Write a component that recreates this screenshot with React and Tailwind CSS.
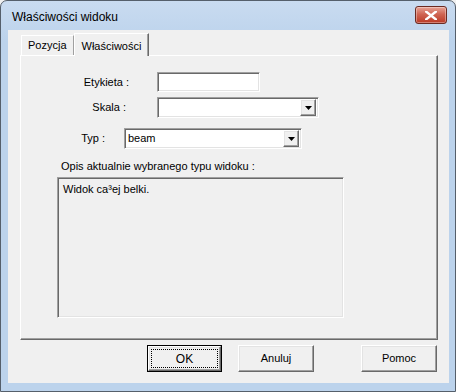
const sunken =
  'border border-t-[#a0a0a0] border-l-[#a0a0a0] border-b-white border-r-white shadow-[inset_1px_1px_0_#696969,inset_-1px_-1px_0_#e3e3e3]';
const raised =
  'border border-t-white border-l-white border-b-[#696969] border-r-[#696969] shadow-[inset_-1px_-1px_0_#a0a0a0,inset_1px_1px_0_#e3e3e3]';

function DropArrow() {
  return (
    <div className={`w-[16px] h-[17px] bg-[#f0f0f0] flex items-center justify-center ${raised}`}>
      <svg width="7" height="4" viewBox="0 0 7 4">
        <path d="M0 0h7L3.5 4z" fill="#000" />
      </svg>
    </div>
  );
}

function Combo({ width, value }) {
  return (
    <div className={`h-[21px] bg-white flex items-center pl-[2px] pr-[2px] ${sunken}`} style={{ width }}>
      <span className="flex-1 text-[11px] text-black leading-none pl-[1px]">{value}</span>
      <DropArrow />
    </div>
  );
}

function Button({ children, isDefault }) {
  if (isDefault) {
    return (
      <div className="w-[75px] h-[27px] border border-black">
        <div className={`w-full h-full bg-[#f0f0f0] p-[2px] ${raised}`}>
          <div className="w-full h-full border border-dotted border-black flex items-center justify-center text-[12px] text-black">
            {children}
          </div>
        </div>
      </div>
    );
  }
  return (
    <div className={`w-[76px] h-[27px] bg-[#f0f0f0] flex items-center justify-center text-[11px] text-black ${raised}`}>
      {children}
    </div>
  );
}

export default function App() {
  return (
    <div className="w-[456px] h-[392px] bg-[#f0f0f0] font-['Liberation_Sans',Arial,sans-serif]">
      <div className="w-[456px] h-[392px] flex flex-col rounded-t-[7px] border border-[#555f6b] bg-[linear-gradient(to_bottom,#c9dbf0,#bcd3ec_40px,#bcd3ec)] overflow-hidden">
        <div className="h-[29px] flex items-center pl-[11px] pr-[8px] shrink-0">
          <span className="flex-1 text-[12px] text-black mt-[2px]">Właściwości widoku</span>
          <div className="w-[32px] h-[18px] rounded-[3px] border border-[#6b2a22] bg-[linear-gradient(to_bottom,#e8a497,#cf6553_45%,#bb3a26)] flex items-center justify-center -mt-[1px] shadow-[inset_0_0_0_1px_rgba(255,255,255,0.35)]">
            <svg width="12" height="9" viewBox="0 0 12 9">
              <path d="M1 0.5 L11 8.5 M11 0.5 L1 8.5" stroke="#fff" strokeWidth="2.4" strokeLinecap="square" />
            </svg>
          </div>
        </div>

        <div className="ml-[7px] w-[441px] h-[353px] bg-[#f0f0f0] flex flex-col shrink-0">
          <div className="flex items-end h-[25px] pl-[13px]">
            <div className="h-[20px] px-[6px] flex items-center border-l border-t border-white border-r border-r-[#a0a0a0] text-[11px] text-black bg-[#f0f0f0]">
              Pozycja
            </div>
            <div className="relative z-10 -mb-px h-[23px] px-[7px] flex items-start pt-[4px] border-l border-t border-white border-r border-r-[#696969] shadow-[inset_-1px_0_0_#a0a0a0] text-[11px] text-black bg-[#f0f0f0]">
              Właściwości
            </div>
          </div>

          <div className="ml-[12px] w-[418px] h-[285px] border border-t-white border-l-white border-b-[#696969] border-r-[#696969] shadow-[inset_-1px_-1px_0_#a0a0a0] flex flex-col text-[11px] text-black">
            <div className="flex items-center mt-[16px]">
              <span className="w-[108px] text-right">Etykieta :</span>
              <div className={`ml-[28px] w-[103px] h-[20px] bg-white ${sunken}`} />
            </div>
            <div className="flex items-center mt-[5px]">
              <span className="w-[105px] text-right">Skala :</span>
              <div className="ml-[31px]">
                <Combo width={162} />
              </div>
            </div>
            <div className="flex items-center mt-[10px]">
              <span className="w-[84px] text-right">Typ :</span>
              <div className="ml-[19px]">
                <Combo width={178} value="beam" />
              </div>
            </div>
            <div className="ml-[40px] mt-[9px]">Opis aktualnie wybranego typu widoku :</div>
            <div className={`ml-[36px] mt-[2px] w-[287px] h-[141px] bg-[#f0f0f0] pl-[5px] pt-[3px] ${sunken}`}>
              Widok ca³ej belki.
            </div>
          </div>

          <div className="flex items-start mt-[5px] pl-[139px]">
            <Button isDefault>OK</Button>
            <div className="ml-[16px]">
              <Button>Anuluj</Button>
            </div>
            <div className="ml-[47px]">
              <Button>Pomoc</Button>
            </div>
          </div>
        </div>
      </div>
    </div>
  );
}
